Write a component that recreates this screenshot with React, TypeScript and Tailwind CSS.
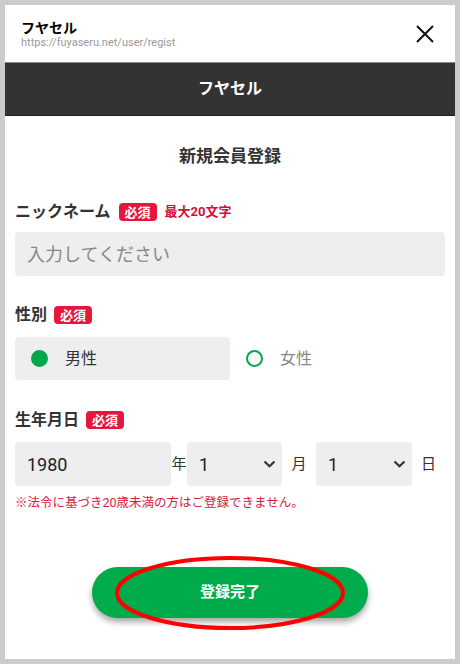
import { useState } from "react";

const FONT = "font-['Roboto','Noto_Sans_CJK_JP',sans-serif]";

function Required() {
  return (
    <span className="inline-flex h-[18px] items-center rounded-[4px] bg-[#e5173d] px-[6px] text-[13px] font-bold leading-none text-white">
      必須
    </span>
  );
}

function Chevron() {
  return (
    <svg width="13" height="8" viewBox="0 0 13 8" className="shrink-0">
      <path d="M1.5 1.5 L6.5 6.3 L11.5 1.5" fill="none" stroke="#333" strokeWidth="2.2" />
    </svg>
  );
}

function Select({ value, className }: { value: string; className: string }) {
  return (
    <div
      className={
        "flex h-[44px] items-center justify-between rounded-[4px] bg-[#eeeeee] pl-[12px] pr-[6px] text-[18px] text-[#222] " +
        className
      }
    >
      <span>{value}</span>
      <Chevron />
    </div>
  );
}

export default function App() {
  const [gender, setGender] = useState<"male" | "female">("male");

  return (
    <div className={"h-[664px] w-[460px] bg-[#cccccc] p-[5px] " + FONT}>
      <div className="flex h-full flex-col bg-white">
        {/* browser-ish header */}
        <div className="flex h-[58px] items-center justify-between border-b border-[#888] pl-[16px] pr-[20px]">
          <div className="flex flex-col pt-[2px]">
            <span className="text-[14px] font-bold leading-[16px] text-black">フヤセル</span>
            <span className="text-[11px] leading-[14px] text-[#999]">
              https://fuyaseru.net/user/regist
            </span>
          </div>
          <svg width="20" height="20" viewBox="0 0 20 20">
            <path d="M2 2 L18 18 M18 2 L2 18" stroke="#111" strokeWidth="2" />
          </svg>
        </div>

        <div className="flex h-[53px] items-center justify-center border-b border-[#222] bg-[#333333]">
          <span className="text-[16px] font-bold text-white">フヤセル</span>
        </div>

        <div className="flex flex-col px-[10px]">
          <h2 className="mt-[28px] text-center text-[17px] font-bold leading-[24px] text-[#333]">
            新規会員登録
          </h2>

          {/* nickname */}
          <div className="mt-[33px] flex h-[22px] items-center gap-[8px]">
            <span className="text-[16px] font-bold text-[#333]">ニックネーム</span>
            <Required />
            <span className="text-[13px] font-bold text-[#d0103a]">最大20文字</span>
          </div>
          <input
            placeholder="入力してください"
            className="mt-[9px] h-[44px] w-full rounded-[4px] bg-[#eeeeee] px-[12px] text-[18px] text-[#333] outline-none placeholder:text-[#888]"
          />

          {/* gender */}
          <div className="mt-[28px] flex h-[22px] items-center gap-[7px]">
            <span className="text-[16px] font-bold text-[#333]">性別</span>
            <Required />
          </div>
          <div className="mt-[11px] flex h-[43px] items-center">
            <button
              type="button"
              onClick={() => setGender("male")}
              className={
                "flex h-full w-[215px] items-center gap-[17px] rounded-[4px] pl-[16px] " +
                (gender === "male" ? "bg-[#eeeeee]" : "")
              }
            >
              <span
                className={
                  "h-[17px] w-[17px] rounded-full border-2 border-[#00a84b] " +
                  (gender === "male" ? "bg-[#00a84b]" : "bg-white")
                }
              />
              <span className={"text-[16px] " + (gender === "male" ? "text-[#333]" : "text-[#888]")}>
                男性
              </span>
            </button>
            <button
              type="button"
              onClick={() => setGender("female")}
              className={
                "flex h-full w-[215px] items-center gap-[17px] rounded-[4px] pl-[16px] " +
                (gender === "female" ? "bg-[#eeeeee]" : "")
              }
            >
              <span
                className={
                  "h-[17px] w-[17px] rounded-full border-2 border-[#00a84b] " +
                  (gender === "female" ? "bg-[#00a84b]" : "bg-white")
                }
              />
              <span className={"text-[16px] " + (gender === "female" ? "text-[#333]" : "text-[#888]")}>
                女性
              </span>
            </button>
          </div>

          {/* birthday */}
          <div className="mt-[29px] flex h-[22px] items-center gap-[7px]">
            <span className="text-[16px] font-bold text-[#333]">生年月日</span>
            <Required />
          </div>
          <div className="mt-[11px] flex h-[44px] items-center">
            <div className="flex h-full w-[156px] items-center rounded-[4px] bg-[#eeeeee] pl-[12px] text-[18px] text-[#222]">
              1980
            </div>
            <span className="w-[16px] text-center text-[15px] text-[#333]">年</span>
            <Select value="1" className="w-[95px]" />
            <span className="w-[34px] text-center text-[15px] text-[#333]">月</span>
            <Select value="1" className="w-[96px]" />
            <span className="w-[33px] text-center text-[15px] text-[#333]">日</span>
          </div>
          <p className="mt-[8px] text-[12.5px] leading-[18px] text-[#d6223f]">
            ※法令に基づき20歳未満の方はご登録できません。
          </p>

          {/* submit */}
          <div className="relative mt-[55px] flex justify-center">
            <button
              type="button"
              className="h-[51px] w-[276px] rounded-full bg-[#00ab4c] text-[15px] font-bold text-white shadow-[0_4px_6px_rgba(0,0,0,0.35)]"
            >
              登録完了
            </button>
            {/* red annotation ring */}
            <svg
              width="234"
              height="78"
              viewBox="0 0 234 78"
              className="pointer-events-none absolute left-[98px] top-[-13px]"
            >
              <ellipse cx="117" cy="39" rx="113" ry="35" fill="none" stroke="#ff0000" strokeWidth="4" />
            </svg>
          </div>
        </div>
      </div>
    </div>
  );
}
